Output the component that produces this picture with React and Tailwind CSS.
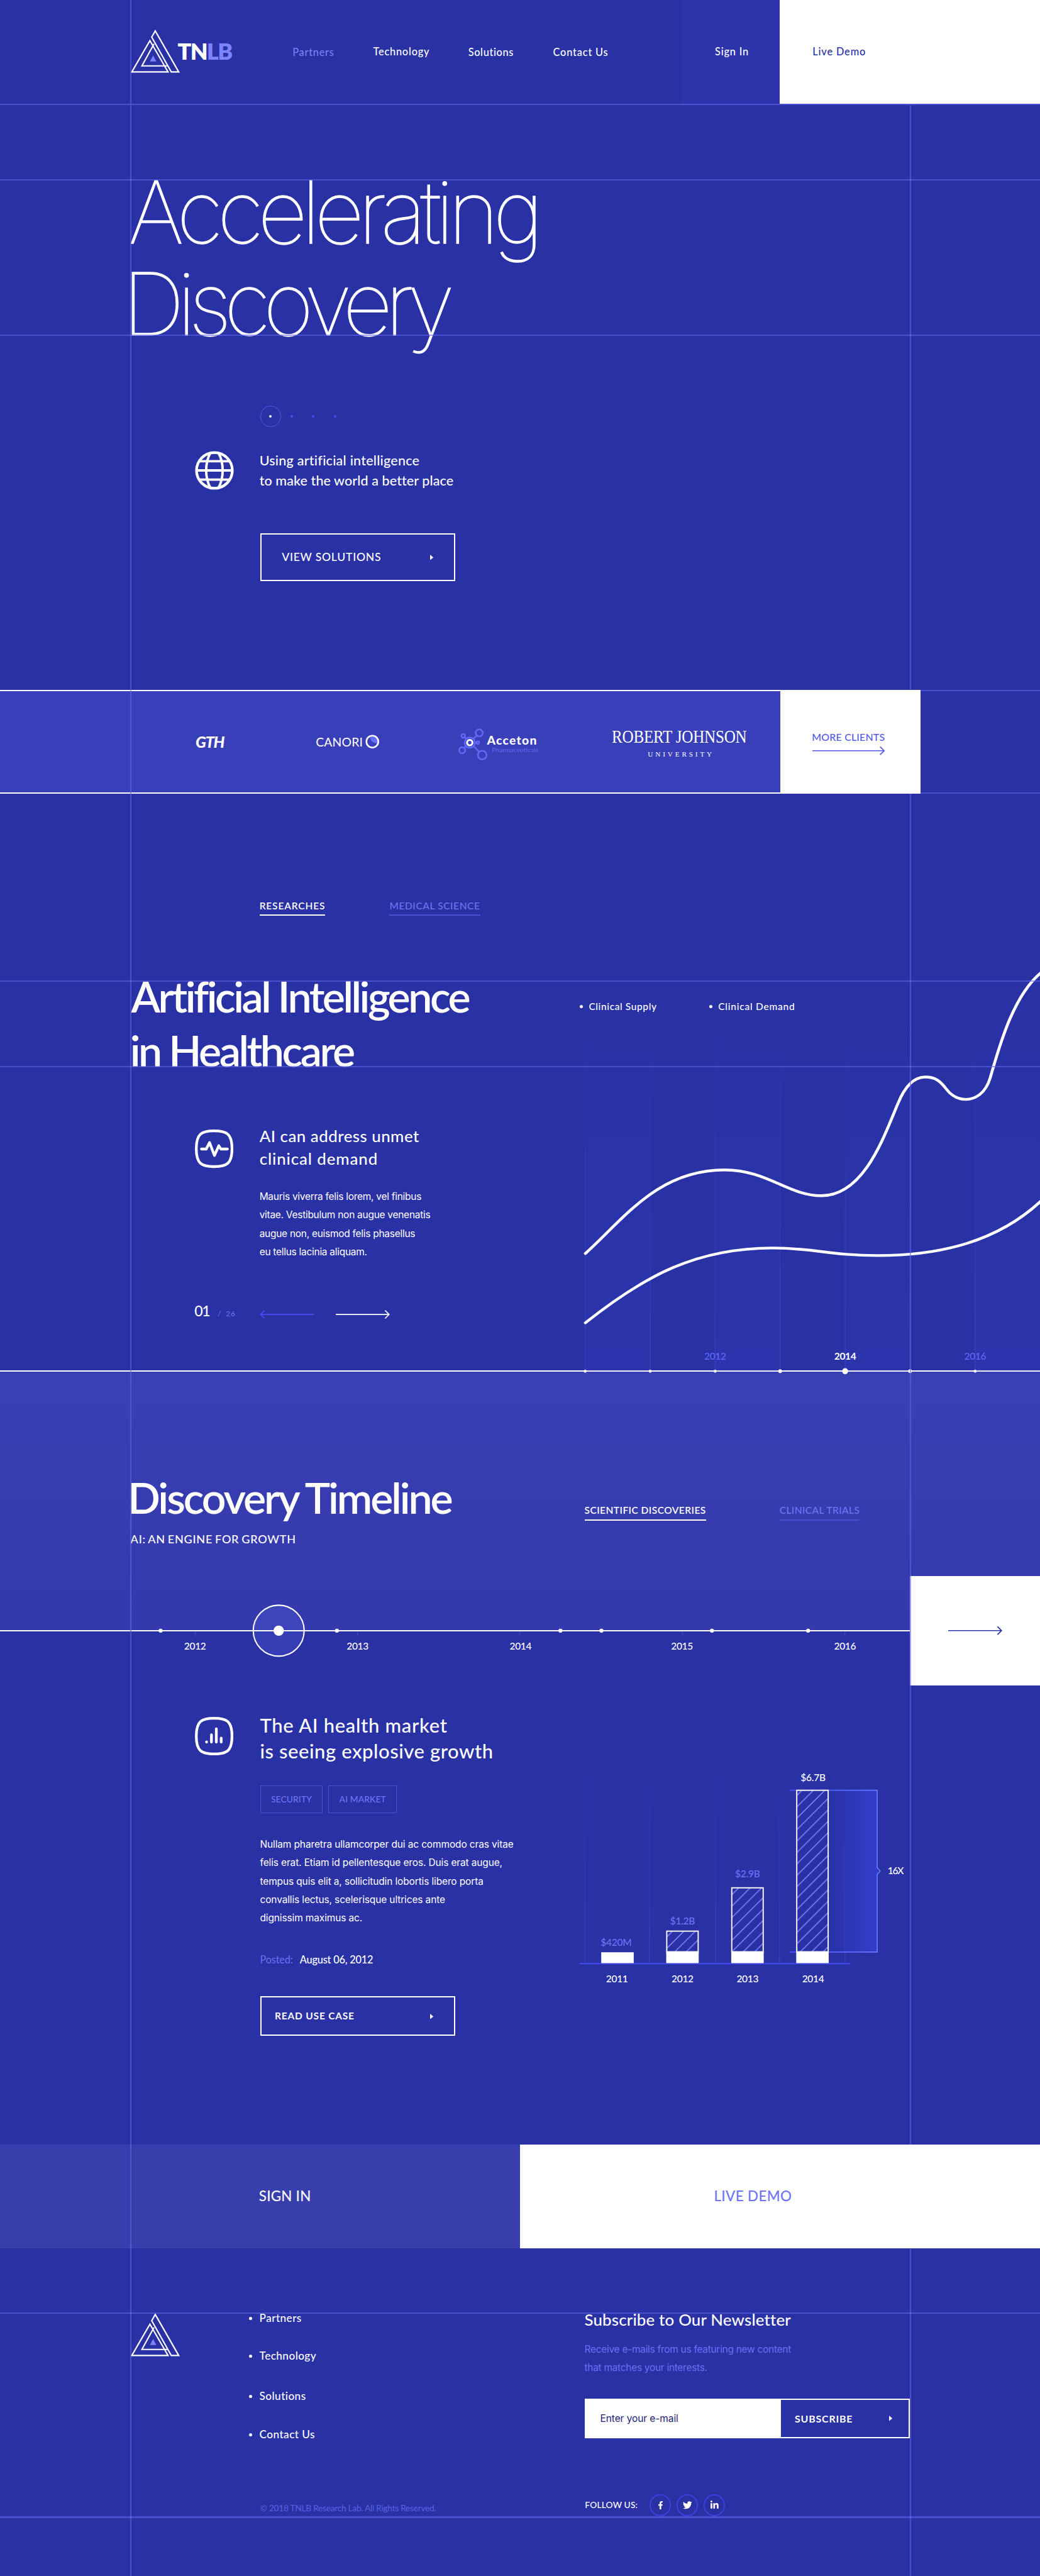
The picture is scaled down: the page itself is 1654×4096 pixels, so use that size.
import React from "react";
import { FaFacebookF, FaTwitter, FaLinkedinIn } from "react-icons/fa";

const LATO = "font-['Lato',sans-serif]";
const INTER = "font-['Inter',sans-serif]";

function LogoMark({ className }) {
  return (
    <svg viewBox="13 20 276 247" className={className} fill="none" stroke="#fff" strokeWidth="7.500">
      <path d="M120 86 18 262H222Z" />
      <path d="M130 66 150 31 282 262H240Z" />
      <path d="M143 104 75 228H218" />
      <path d="M138 170 120 203H156Z" fill="#7f83ff" stroke="none" />
    </svg>
  );
}

function Arrow({ w, color, left = false, stroke = 2, className = "" }) {
  return (
    <svg width={w} height="18" viewBox={`0 0 ${w} 18`} className={className} fill="none" stroke={color} strokeWidth={stroke}>
      {left ? <path d={`M${w} 9H2M9 1.5 1.5 9 9 16.5`} /> : <path d={`M0 9H${w - 2}M${w - 9} 1.5 ${w - 1.5} 9 ${w - 9} 16.5`} />}
    </svg>
  );
}

function Caret({ className = "" }) {
  return (
    <svg width="6" height="10" viewBox="0 0 6 10" className={className}>
      <path d="M0 0 6 5 0 10Z" fill="#fff" />
    </svg>
  );
}

function Squircle({ children, className }) {
  return (
    <svg width="71" height="71" viewBox="0 0 71 71" className={className} fill="none" stroke="#fff" strokeWidth="5" strokeLinecap="round" strokeLinejoin="round">
      <path d="M35.5 2.5C59 2.5 68.500 8 68.500 35.500S59 68.500 35.500 68.500 2.500 63 2.500 35.500 12 2.500 35.500 2.500Z" />
      {children}
    </svg>
  );
}

function Header() {
  return (
    <header className={`grid h-[192px] grid-cols-[241px_299px_149px_175.5px_156.500px_239px_180px_480px] items-center text-[19px] font-medium ${LATO}`}>
      <span />
      <div className="flex items-center">
        <LogoMark className="w-[91px] h-[81px] -mt-1" />
        <span className="-ml-[4px] -mt-[2px] text-[41.5px] leading-none font-extrabold tracking-[-0.043em]">
          TN<span className="text-[#7f83ff]">LB</span>
        </span>
      </div>
      <a className="pt-[2px] tracking-[0.044em] text-[#7a7ff2]">Partners</a>
      <a className="tracking-[0.047em] pb-[1px]">Technology</a>
      <a className="pt-[2px] tracking-[0.038em]">Solutions</a>
      <a className="pt-[2px] tracking-[0.05em]">Contact Us</a>
      <a className="flex h-full items-center bg-[#2d34ac] pl-[60px] pb-[1px] tracking-[0.048em]">Sign In</a>
      <a className="flex h-full items-center bg-white pl-[60px] pb-[1px] tracking-[0.053em] text-[#2931a5]">Live Demo</a>
    </header>
  );
}

function Hero() {
  return (
    <section className="h-[1081px] pt-[114px]">
      <h1 className={`text-[160px] leading-[170px] font-thin [-webkit-text-stroke:1.500px_#fff] ${INTER}`}>
        <span className="block pl-[237px] tracking-[-0.067em]">Accelerating</span>
        <span className="block pl-[226px] tracking-[-0.083em]">Discovery</span>
      </h1>
      <div className="ml-[480px] mt-[103px] flex h-[39px] items-center">
        <span className="flex size-[39px] items-center justify-center rounded-full border-[2px] border-[#5257e8]">
          <i className="size-[5px] rounded-full bg-white" />
        </span>
        <i className="ml-[17px] size-[5px] rounded-full bg-[#474cf5]" />
        <i className="ml-[35px] size-[5px] rounded-full bg-[#474cf5]" />
        <i className="ml-[35px] size-[5px] rounded-full bg-[#474cf5]" />
      </div>
      <div className="ml-[360px] mt-[43px] flex">
        <svg width="72" height="72" viewBox="0 0 72 72" fill="none" stroke="#fff" strokeWidth="5" className="mt-[1px]">
          <circle cx="36" cy="36" r="33" />
          <path d="M5 36H67M8 19H64M8 53H64M29 3C18 22 18 50 29 69M43 3C54 22 54 50 43 69" strokeWidth="4.5" />
        </svg>
        <p className={`ml-[47px] pt-[1px] text-[25px] leading-[37px] font-medium ${LATO}`}>
          <span className="block tracking-[0.011em]">Using artificial intelligence</span>
          <span className="block tracking-[0.004em]">to make the world a better place</span>
        </p>
      </div>
      <a className={`ml-[480px] mt-[78px] flex h-[89px] w-[360px] items-center justify-between border-[2.4px] border-white pl-[38px] pr-[38px] text-[20.5px] font-medium tracking-[0.041em] ${LATO}`}>
        VIEW SOLUTIONS
        <Caret />
      </a>
    </section>
  );
}

function Clients() {
  return (
    <section className="flex h-[192px]">
      <div className={`grid w-[1440px] grid-cols-[361px_222px_263px_284px_310px] border-y-[2.4px] border-white bg-[#383fb8] ${LATO}`}>
        <span />
        <span className="self-center text-[29px] leading-none font-black italic tracking-[-0.045em]">GTH</span>
        <div className="flex items-center self-center text-[22.5px] leading-none tracking-[0.008em]">
          CANORI
          <svg width="26" height="26" viewBox="0 0 26 26" className="ml-[5px] -mt-[1px]">
            <path d="M8 3C9 12 15 17 23 16A12 12 0 0 0 8 3Z" fill="#6670ff" />
            <circle cx="13" cy="13" r="11" fill="none" stroke="#fff" strokeWidth="3" />
          </svg>
        </div>
        <div className="flex items-start">
          <svg width="55" height="62" viewBox="0 0 55 62" fill="none" stroke="#6068f5" strokeWidth="3" className="mt-[69px] shrink-0">
            <path d="M28 19 34 14M15 20 11 16M15 33 11 36M28 33 38 43M31 27H34" />
            <circle cx="38.500" cy="8.500" r="6.500" />
            <circle cx="9" cy="14" r="3.500" />
            <circle cx="36" cy="26.500" r="2.500" />
            <circle cx="7" cy="40.500" r="5.500" />
            <circle cx="44" cy="49.500" r="8" />
            <circle cx="21" cy="26.500" r="9.500" />
            <circle cx="21" cy="26.500" r="5" stroke="#fff" strokeWidth="3.500" />
          </svg>
          <div className="mt-[81px] -ml-[2px]">
            <div className="text-[22.5px] leading-[22px] font-black tracking-[0.065em]">Acceton</div>
            <div className="-mt-[1px] ml-[9px] text-[12px] leading-[14px] text-[#5f68f2]">Pharmaceuticals</div>
          </div>
        </div>
        <div className="w-[249px] pt-[68px] font-['Liberation_Serif',serif]">
          <div className="origin-left scale-x-[0.885] whitespace-nowrap text-[33px] leading-[34px] tracking-[-0.01em]">ROBERT JOHNSON</div>
          <div className="mt-[7px] pl-[66px] text-[13px] leading-[14px] tracking-[0.345em]">UNIVERSITY</div>
        </div>
      </div>
      <a className={`w-[260px] bg-white pl-[59px] pt-[77px] text-[18.5px] leading-[20px] font-medium tracking-[0.012em] text-[#5257e8] ${LATO}`}>
        MORE CLIENTS
        <Arrow w={134} color="#5257e8" className="mt-[7px] ml-[1px] block" />
      </a>
      <div className="flex-1 border-y-[2.4px] border-[#4a50cf]" />
    </section>
  );
}

const gridX = [1080, 1200, 1320, 1440, 1560, 1680, 1800];

function DemandChart() {
  return (
    <svg width="850" height="1065" viewBox="1070 1465 850 1065" className="col-start-1 row-start-1 block overflow-visible">
      <defs>
        <linearGradient id="col" x1="0" y1="1880" x2="0" y2="2530" gradientUnits="userSpaceOnUse">
          <stop offset="0" stopColor="#3039b8" stopOpacity="0" />
          <stop offset="1" stopColor="#3039b8" stopOpacity="0.4" />
        </linearGradient>
        <linearGradient id="rule" x1="0" y1="1800" x2="0" y2="2530" gradientUnits="userSpaceOnUse">
          <stop offset="0" stopColor="#3b42cf" stopOpacity="0" />
          <stop offset="1" stopColor="#3b42cf" stopOpacity="0.8" />
        </linearGradient>
      </defs>
      {[1080, 1320, 1560, 1800].map((x) => (
        <rect key={x} x={x} y="1880" width="120" height="650" fill="url(#col)" />
      ))}
      {gridX.map((x) => (
        <rect key={x} x={x - 0.75} y="1800" width="1.5" height="730" fill="url(#rule)" />
      ))}
      <g transform="translate(1040 1740) scale(.5612 .5357)" fill="none" stroke="#fff" strokeWidth="9.500" strokeLinecap="round">
        <path d="M72 1071C200 950 310 783 530 783 670 783 740 872 848 872 990 872 1055 665 1100 555 1122 498 1150 463 1190 463 1225 463 1240 478 1260 505 1277 528 1298 540 1324 540 1352 540 1388 522 1404 465 1432 365 1478 180 1575 100" />
        <path d="M72 1310C270 1145 440 1052 690 1052 820 1052 880 1078 1035 1078 1240 1078 1430 1030 1575 886" />
      </g>
      {gridX.map((x) => (
        <circle key={x} cx={x} cy="2531" r={x === 1560 ? 5.500 : x === 1440 || x === 1680 ? 3.500 : 2.800} fill="#fff" />
      ))}
      <g className={LATO} fontSize="18" fontWeight="500" textAnchor="middle" letterSpacing="-0.4" fill="#6166fa">
        <text x="1320" y="2510">2012</text>
        <text x="1560" y="2510" fill="#fff" fontWeight="700">2014</text>
        <text x="1800" y="2510">2016</text>
      </g>
    </svg>
  );
}

function Research() {
  return (
    <section className="relative z-10 grid h-[1065px] grid-cols-[1070px_850px]">
      <div>
        <div className={`mt-[197px] flex pl-[479px] text-[18px] leading-[20px] ${LATO}`}>
          <div className="w-[240px]">
            <a className="inline-block border-b-[3px] border-white pb-[6px] font-semibold tracking-[0.055em]">RESEARCHES</a>
          </div>
          <a className="inline-block border-b-[3px] border-[#4a50d0] pb-[6px] font-medium tracking-[0.039em] text-[#6f74f5]">MEDICAL SCIENCE</a>
        </div>
        <h2 className={`mt-[98px] text-[79px] leading-[100px] font-semibold tracking-[-0.051em] ${LATO}`}>
          <span className="block pl-[242px]">Artificial Intelligence</span>
          <span className="block pl-[240px]">in Healthcare</span>
        </h2>
        <div className="mt-[86px] flex pl-[360px]">
          <Squircle className="mt-[11px]">
            <path d="M12 36H21L27 24 36 48 44 30 48 36H60" />
          </Squircle>
          <div className="ml-[48px]">
            <h3 className={`pt-[1px] text-[30px] leading-[42px] font-medium ${LATO}`}>
              <span className="block tracking-[0.019em]">AI can address unmet</span>
              <span className="block tracking-[0.035em]">clinical demand</span>
            </h3>
            <p className={`mt-[32.5px] text-[18px] leading-[34px] tracking-[-0.018em] ${INTER}`}>
              Mauris viverra felis lorem, vel finibus<br />
              vitae. Vestibulum non augue venenatis<br />
              augue non, euismod felis phasellus<br />
              eu tellus lacinia aliquam.
            </p>
          </div>
        </div>
        <div className={`mt-[78px] flex h-[30px] items-baseline pl-[359px] leading-[30px] ${LATO}`}>
          <span className="w-[43px] text-[27px] font-medium tracking-[-0.06em]">01</span>
          <span className="w-[15px] text-[14px] text-[#6a70f2]">/</span>
          <span className="w-[63px] text-[14px] font-medium tracking-[0.06em] text-[#6a70f2]">26</span>
          <Arrow w={100} color="#474cf5" left className="mr-[40px] translate-y-[5px]" />
          <Arrow w={100} color="#fff" className="translate-y-[5px]" />
        </div>
      </div>
      <div className="grid">
        <DemandChart />
        <div className={`col-start-1 row-start-1 mt-[383px] flex h-[20px] items-center text-[18px] leading-[20px] font-medium ${LATO}`}>
          <div className="flex w-[239px] items-center gap-[11px]">
            <i className="size-[6px] rounded-full bg-white" />
            <span className="tracking-[0.039em]">Clinical Supply</span>
          </div>
          <div className="flex items-center gap-[11px]">
            <i className="size-[6px] rounded-full bg-white" />
            <span className="tracking-[0.049em]">Clinical Demand</span>
          </div>
        </div>
      </div>
    </section>
  );
}

function Timeline() {
  return (
    <section>
      <div className="h-[479px] border-t-[2.4px] border-white bg-gradient-to-b from-[#393fb4] to-[#3439ad]">
        <div className={`grid grid-cols-[1079px_360px_1fr] items-start ${LATO}`}>
          <div className="pt-[192px]">
            <h2 className="pl-[236px] text-[79px] leading-[80px] font-semibold tracking-[-0.045em]">Discovery Timeline</h2>
            <p className="mt-[25px] pl-[241px] text-[21px] leading-[24px] font-medium tracking-[0.04em] [word-spacing:-0.07em]">AI: AN ENGINE FOR GROWTH</p>
          </div>
          <div className="pt-[245px] text-[18px] leading-[20px]">
            <a className="inline-block border-b-[3px] border-white pb-[7px] font-semibold tracking-[0.029em]">SCIENTIFIC DISCOVERIES</a>
          </div>
          <div className="pt-[245px] text-[18px] leading-[20px]">
            <a className="inline-block border-b-[3px] border-[#4a50d0] pb-[7px] font-medium tracking-[0.028em] text-[#6f74f5]">CLINICAL TRIALS</a>
          </div>
        </div>
      </div>
      <div className="flex h-[102px] items-end">
        <svg width="1680" height="102" viewBox="0 3009 1680 102" className="relative block overflow-visible">
          <g fill="#3f44c4">
            {[361, 660, 960, 1260, 1560].map((x) => (
              <rect key={x} x={x - 1} y="3011" width="1.800" height="9" />
            ))}
          </g>
          <circle cx="514.500" cy="3010" r="47" fill="#5a62e0" fillOpacity="0.28" stroke="#fff" strokeWidth="2.400" />
          <rect x="0" y="3009" width="1681" height="2.300" fill="#fff" />
          <circle cx="514.500" cy="3010" r="9.500" fill="#fff" />
          {[296.5, 622, 1034.7, 1110.4, 1314.5, 1492].map((x) => (
            <circle key={x} cx={x} cy="3010" r="3.700" fill="#fff" />
          ))}
          <g className={LATO} fontSize="18" fontWeight="500" textAnchor="middle" letterSpacing="-0.4" fill="#fff">
            <text x="360" y="3045">2012</text>
            <text x="660" y="3045">2013</text>
            <text x="961" y="3045">2014</text>
            <text x="1259" y="3045">2015</text>
            <text x="1560" y="3045">2016</text>
          </g>
        </svg>
        <div className="flex h-[202px] w-[240px] items-center bg-white pl-[70px]">
          <Arrow w={100} color="#2931a5" />
        </div>
      </div>
    </section>
  );
}

const bars = [
  { year: "2011", x: 1140, top: 3603, label: "$420M", ly: 3591, lx: 1137.5, yx: 1139 },
  { year: "2012", x: 1260, top: 3563, label: "$1.2B", ly: 3552, lx: 1260, yx: 1260 },
  { year: "2013", x: 1380, top: 3483, label: "$2.9B", ly: 3465, lx: 1380, yx: 1380 },
  { year: "2014", x: 1500, top: 3303, label: "$6.7B", ly: 3287, lx: 1501, yx: 1501 },
];

function GrowthChart() {
  return (
    <svg width="620" height="460" viewBox="1068 3215 620 460" className="mt-[104px] block">
      <defs>
        <pattern id="hatch" width="14.900" height="14.900" patternUnits="userSpaceOnUse" patternTransform="rotate(45)">
          <rect width="1.900" height="14.900" fill="#7b80ff" />
        </pattern>
        <linearGradient id="fade" x1="0" y1="3215" x2="0" y2="3623" gradientUnits="userSpaceOnUse">
          <stop offset="0" stopColor="#343bc4" stopOpacity="0" />
          <stop offset="1" stopColor="#343bc4" />
        </linearGradient>
        <linearGradient id="span" x1="0" x2="1">
          <stop offset="0" stopColor="#343dcc" stopOpacity="0" />
          <stop offset="1" stopColor="#343dcc" />
        </linearGradient>
        <linearGradient id="edge" x1="1458" y1="0" x2="1620" y2="0" gradientUnits="userSpaceOnUse">
          <stop offset="0" stopColor="#4450ff" />
          <stop offset="1" stopColor="#6478ff" />
        </linearGradient>
      </defs>
      <rect x="1530" y="3304" width="90" height="299" fill="url(#span)" />
      {[1080, 1199, 1321, 1439, 1560].map((x) => (
        <rect key={x} x={x - 1} y="3215" width="2" height="408" fill="url(#fade)" />
      ))}
      <path d="M1458 3304H1619.500V3447L1625 3453 1619.500 3459V3602.500H1458" fill="none" stroke="url(#edge)" strokeWidth="2" />
      <rect x="1070" y="3623" width="499" height="2" fill="#4450ff" />
      {bars.map((b) => (
        <g key={b.year}>
          {b.top < 3600 && (
            <>
              <rect x={b.x - 29} y={b.top + 1} width="58" height={3602 - b.top} fill="#2931a5" />
              <rect x={b.x - 29} y={b.top + 1} width="58" height={3602 - b.top} fill="url(#hatch)" stroke="#fff" strokeWidth="2.200" />
            </>
          )}
          <rect x={b.x - 30} y={b.top < 3600 ? 3601 : 3603} width="60" height={b.top < 3600 ? 22 : 20} fill="#fff" />
        </g>
      ))}
      <g className={LATO} fontSize="18" fontWeight="500" textAnchor="middle" fill="#fff">
        {bars.map((b) => (
          <g key={b.year}>
            <text x={b.lx} y={b.ly} letterSpacing="-0.3" fill={b.year === "2014" ? "#fff" : "#6f74f8"}>{b.label}</text>
            <text x={b.yx} y="3659" letterSpacing="-0.4">{b.year}</text>
          </g>
        ))}
        <text x="1653" y="3459" letterSpacing="-1.500">16X</text>
      </g>
    </svg>
  );
}

function Article() {
  return (
    <section className="grid h-[847px] grid-cols-[360px_120px_588px_1fr] items-start">
      <span />
      <Squircle className="mt-[58px]">
        <path d="M21.500 46V46.500M30.500 33V46.500M39.500 22V46.500M48.500 39V46.500" />
      </Squircle>
      <div>
        <h3 className={`mt-[49.500px] text-[36px] leading-[48px] font-medium ${LATO}`}>
          <span className="block tracking-[0.022em]">The AI health market</span>
          <span className="block tracking-[0.018em]">is seeing explosive growth</span>
        </h3>
        <div className={`mt-[39.500px] flex gap-[10px] text-[16px] font-medium tracking-[0.01em] text-[#6f74f5] ${LATO}`}>
          <span className="flex h-[51px] w-[116px] items-center justify-center border border-[#4a50cf]">SECURITY</span>
          <span className="flex h-[51px] w-[127px] items-center justify-center border border-[#4a50cf]">AI MARKET</span>
        </div>
        <p className={`mt-[40.5px] whitespace-nowrap text-[18px] leading-[34px] tracking-[-0.009em] ${INTER}`}>
          Nullam pharetra ullamcorper dui ac commodo cras vitae<br />
          felis erat. Etiam id pellentesque eros. Duis erat augue,<br />
          tempus quis elit a, sollicitudin lobortis libero porta<br />
          convallis lectus, scelerisque ultrices ante<br />
          dignissim maximus ac.
        </p>
        <div className={`mt-[48px] flex gap-[13px] text-[19px] leading-[24px] ${LATO}`}>
          <span className="tracking-[-0.012em] text-[#6a70f2]">Posted:</span>
          <span className="font-medium tracking-[-0.013em]">August 06, 2012</span>
        </div>
        <a className={`mt-[55.500px] flex h-[73px] w-[360px] items-center justify-between border-[2.4px] border-white pl-[25px] pr-[38px] text-[18px] font-bold tracking-[0.052em] ${LATO}`}>
          READ USE CASE
          <Caret />
        </a>
      </div>
      <GrowthChart />
    </section>
  );
}

function CallToAction() {
  return (
    <section className={`grid h-[192px] grid-cols-2 text-[26px] font-medium ${LATO}`}>
      <a className="flex items-center bg-[#383fad] pl-[478px] tracking-[0.011em]">SIGN IN</a>
      <a className="flex items-center bg-white pl-[358px] tracking-[0.017em] text-[#6f74f5]">LIVE DEMO</a>
    </section>
  );
}

function FooterLink({ children, className }) {
  return (
    <li className={`flex items-center gap-[13px] ${className}`}>
      <i className="size-[6px] rounded-full bg-white" />
      {children}
    </li>
  );
}

function Footer() {
  return (
    <footer className="grid h-[604px] grid-cols-[241px_219px_620px_600px_1fr] items-start">
      <span />
      <LogoMark className="mt-[119px] w-[91px] h-[81px]" />
      <div className={LATO}>
        <ul className="pt-[117px] text-[20px] leading-[24px] font-medium tracking-[0.024em]">
          <FooterLink>Partners</FooterLink>
          <FooterLink className="mt-[46px]">Technology</FooterLink>
          <FooterLink className="mt-[50px]">Solutions</FooterLink>
          <FooterLink className="mt-[47px]">Contact Us</FooterLink>
        </ul>
        <p className="mt-[113px] pl-[20px] text-[16px] leading-[20px] tracking-[-0.021em] text-[#5a60e4]">© 2018 TNLB Research Lab. All Rights Reserved.</p>
      </div>
      <div>
        <h3 className={`-ml-[1px] pt-[114px] text-[30px] leading-[36px] font-medium tracking-[0.007em] ${LATO}`}>Subscribe to Our Newsletter</h3>
        <p className={`mt-[19px] -ml-[1px] text-[18px] leading-[34px] tracking-[-0.019em] text-[#6a6ff2] ${INTER}`}>
          Receive e-mails from us featuring new content<br />that matches your interests.
        </p>
        <form className="mt-[40.500px] flex h-[73px]">
          <div className={`flex w-[360px] items-center bg-white pl-[28px] text-[18px] tracking-[-0.005em] text-[#251c7a] ${INTER}`}>Enter your e-mail</div>
          <a className={`flex w-[240px] items-center justify-between border-[2.4px] border-white pl-[25px] pr-[30px] text-[18.500px] font-bold tracking-[0.051em] ${LATO}`}>
            SUBSCRIBE
            <Caret />
          </a>
        </form>
        <div className={`mt-[104px] flex h-[40px] items-center gap-[10px] text-[16px] font-medium ${LATO}`}>
          <span className="w-[109px] tracking-[0.013em]">FOLLOW US:</span>
          {[[FaFacebookF, 15], [FaTwitter, 17], [FaLinkedinIn, 17]].map(([Icon, size], i) => (
            <span key={i} className="flex size-[40px] items-center justify-center rounded-full border-[2.4px] border-[#3c41dd]">
              <Icon size={size} />
            </span>
          ))}
        </div>
      </div>
    </footer>
  );
}

function GuideLines() {
  return (
    <div className="pointer-events-none absolute inset-0 z-20">
      <i className="absolute left-[240px] top-0 h-full w-[2.4px] bg-[#6065eb]/60" />
      <i className="absolute left-[1680px] top-[194px] h-[1079px] w-[2.4px] bg-[#6065eb]/60" />
      <i className="absolute left-[1680px] top-[1465px] h-[2493px] w-[2.4px] bg-[#6065eb]/60" />
      <i className="absolute left-[1680px] top-[4150px] h-[604px] w-[2.4px] bg-[#6065eb]/60" />
      <i className="absolute left-0 top-[192px] h-[2.4px] w-full bg-[#4a50cf]" />
      <i className="absolute left-0 top-[331px] h-[2.4px] w-full bg-[#6065eb]/60" />
      <i className="absolute left-0 top-[618px] h-[2.4px] w-full bg-[#6065eb]/60" />
      <i className="absolute left-0 top-[1810px] h-[2.4px] w-full bg-[#6065eb]/60" />
      <i className="absolute left-0 top-[1968px] h-[2.4px] w-full bg-[#6065eb]/60" />
      <i className="absolute left-0 top-[4268px] h-[2.4px] w-full bg-[#6065eb]/60" />
      <i className="absolute left-0 top-[4645px] h-[2.4px] w-full bg-[#6065eb]/60" />
    </div>
  );
}

export default function App() {
  return (
    <div className="relative h-[4754.8px] w-[1920px] overflow-hidden bg-[#2931a5] text-white [zoom:0.8614583]">
      <Header />
      <Hero />
      <Clients />
      <Research />
      <Timeline />
      <Article />
      <CallToAction />
      <Footer />
      <GuideLines />
    </div>
  );
}
